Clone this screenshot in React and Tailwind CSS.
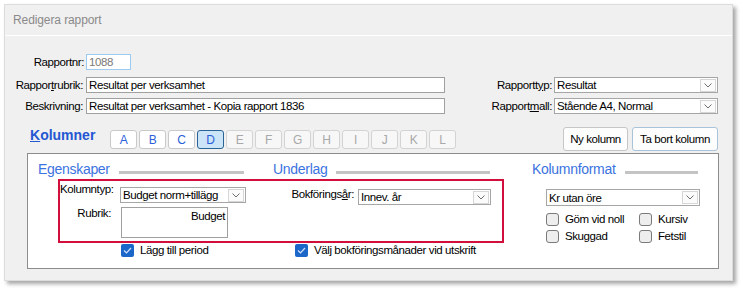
// Redigera rapport – dialog med kolumninställningar
import React from "react";

const TABS = ["A", "B", "C", "D", "E", "F", "G", "H", "I", "J", "K", "L"];

// Rullgardinslista med liten pilknapp till höger
const Select = ({ value, className }) => (
  <div className={`flex items-center border border-[#a6a6a6] bg-white ${className}`}>
    <span className="flex-1 truncate pl-[2px]">{value}</span>
    <span className="mr-[1px] flex h-[13px] w-[16px] items-center justify-center border border-[#d6d6d6] bg-[#fbfbfb]">
      <svg width="8" height="5" viewBox="0 0 8 5">
        <polyline points="0.5,0.5 4,4 7.5,0.5" fill="none" stroke="#6f6f6f" strokeWidth="1" />
      </svg>
    </span>
  </div>
);

const Checkbox = ({ checked, label }) => (
  <div className="flex h-[13px] items-center gap-[6px] leading-[13px]">
    {checked ? (
      <span className="flex h-[13px] w-[13px] items-center justify-center rounded-[2px] bg-[#1b66c9]">
        <svg width="9" height="7" viewBox="0 0 9 7">
          <polyline points="1,3.5 3.5,6 8,1" fill="none" stroke="#cfe2ff" strokeWidth="1.2" />
        </svg>
      </span>
    ) : (
      <span className="h-[13px] w-[13px] rounded-[3px] border border-[#7a7a7a] bg-[#eeeeee]" />
    )}
    <span>{label}</span>
  </div>
);

// Rubrik i gruppruta med grå linje efter
const Heading = ({ title, className }) => (
  <div className={`flex items-center ${className}`}>
    <span className="text-[14px] leading-[16px] tracking-[-0.3px] text-[#3b73e0]">{title}</span>
    <span className="ml-[9px] mt-[6px] h-[3px] flex-1 bg-[#c4c4c4]" />
  </div>
);

const Tab = ({ letter }) => {
  const active = letter === "D";
  const enabled = ["A", "B", "C", "D"].includes(letter);
  const cls = active
    ? "border-[#2a6395] bg-[#cce4f7] text-[#2b5fd9]"
    : enabled
      ? "border-[#c9c9c9] bg-white text-[#2b5fd9]"
      : "border-[#d3d3d3] bg-[#f7f7f7] text-[#a8a8a8]";
  return (
    <div className={`flex h-[19px] w-[27px] items-center justify-center rounded-[3px] border text-[12px] ${cls}`}>
      {letter}
    </div>
  );
};

export default function App() {
  return (
    <div className="h-[291px] w-[741px] bg-white pl-[4px] pt-[4px] font-['Liberation_Sans',Arial,sans-serif] text-[11.5px] leading-[14px] tracking-[-0.4px] text-black">
      <div className="flex h-[277px] w-[729px] flex-col border border-[#dcdcdc] bg-[#f0f0f0] shadow-[3px_3px_4px_rgba(0,0,0,0.35)]">
        {/* Titelrad */}
        <div className="flex h-[31px] items-center border-b border-white pl-[8px] text-[12px] tracking-[-0.1px] text-[#8a8a8a]">
          Redigera rapport
        </div>

        {/* Rapportnr */}
        <div className="mt-[18px] flex h-[16px] items-center">
          <span className="w-[79px] text-right">Rapportnr:</span>
          <div className="ml-[2px] flex h-[16px] w-[45px] items-center border border-[#9ccaf0] bg-white pl-[2px] text-[#7a7a7a]">
            1088
          </div>
        </div>

        {/* Rapportrubrik + Rapporttyp */}
        <div className="mt-[7px] flex h-[16px] items-center">
          <span className="w-[78px] text-right">
            Rappor<u>t</u>rubrik:
          </span>
          <div className="ml-[3px] flex h-[16px] w-[359px] items-center border border-[#a0a0a0] bg-white pl-[2px]">
            Resultat per verksamhet
          </div>
          <span className="w-[107px] text-right">
            Rapportt<u>y</u>p:
          </span>
          <Select value="Resultat" className="ml-[2px] h-[16px] w-[164px]" />
        </div>

        {/* Beskrivning + Rapportmall */}
        <div className="mt-[5px] flex h-[16px] items-center">
          <span className="w-[78px] text-right">Beskrivning:</span>
          <div className="ml-[3px] flex h-[16px] w-[359px] items-center border border-[#a0a0a0] bg-white pl-[2px]">
            Resultat per verksamhet - Kopia rapport 1836
          </div>
          <span className="w-[107px] text-right">
            Rapport<u>m</u>all:
          </span>
          <Select value="Stående A4, Normal" className="ml-[2px] h-[16px] w-[164px]" />
        </div>

        {/* Kolumner: flikar och knappar */}
        <div className="mt-[13px] flex h-[24px] items-start pr-[14px]">
          <span className="ml-[25px] w-[80px] text-[14px] font-bold leading-[16px] tracking-[0px] text-[#2457d3]">
            <u>K</u>olumner
          </span>
          <div className="mt-[3px] flex gap-[2px]">
            {TABS.map((t) => (
              <Tab key={t} letter={t} />
            ))}
          </div>
          <div className="ml-auto flex gap-[4px]">
            <div className="flex h-[24px] w-[65px] items-center justify-center rounded-[3px] border border-[#c6c6c6] bg-[#fdfdfd]">
              Ny kolumn
            </div>
            <div className="flex h-[24px] w-[86px] items-center justify-center rounded-[3px] border border-[#a9c3da] bg-[#fdfdfd]">
              Ta bort kolumn
            </div>
          </div>
        </div>

        {/* Gruppruta */}
        <div className="ml-[22px] mt-[2px] h-[116px] w-[692px] border border-[#8c8c8c] bg-white">
          <div className="flex pl-[10px] pt-[7px]">
            <Heading title="Egenskaper" className="w-[206px]" />
            <Heading title="Underlag" className="ml-[29px] w-[217px]" />
            <Heading title="Kolumnformat" className="ml-[42px] w-[166px]" />
          </div>

          <div className="mt-[2px] flex items-start">
            <div className="ml-[30px] flex flex-col">
              {/* Markerad ruta */}
              <div className="flex h-[64px] w-[446px] border-2 border-[#d20f3c]">
                <div className="flex w-[186px] flex-col">
                  <div className="flex items-start">
                    <span className="mt-[1px] w-[53px] text-right">Kolumntyp:</span>
                    <Select value="Budget norm+tillägg" className="ml-[7px] mt-[6px] h-[16px] w-[126px]" />
                  </div>
                  <div className="mt-[3px] flex items-start">
                    <span className="w-[51px] text-right">Rubrik:</span>
                    <div className="ml-[10px] mt-[1px] h-[31px] w-[107px] border border-[#a0a0a0] bg-white pr-[2px] pt-[1px] text-right">
                      Budget
                    </div>
                  </div>
                </div>
                <div className="ml-[44px] flex items-start">
                  <span className="mt-[6px] w-[64px] text-right">
                    Bokförings<u>å</u>r:
                  </span>
                  <Select value="Innev. år" className="ml-[4px] mt-[8px] h-[16px] w-[133px]" />
                </div>
              </div>

              <div className="mt-[1px] flex">
                <div className="ml-[63px] w-[174px]">
                  <Checkbox checked label="Lägg till period" />
                </div>
                <Checkbox checked label="Välj bokföringsmånader vid utskrift" />
              </div>
            </div>

            {/* Kolumnformat */}
            <div className="ml-[42px] mt-[10px] flex flex-col">
              <Select value="Kr utan öre" className="h-[17px] w-[154px]" />
              <div className="mt-[7px] grid grid-cols-[93px_auto] gap-y-[4px]">
                <Checkbox label="Göm vid noll" />
                <Checkbox label="Kursiv" />
                <Checkbox label="Skuggad" />
                <Checkbox label="Fetstil" />
              </div>
            </div>
          </div>
        </div>
      </div>
    </div>
  );
}
